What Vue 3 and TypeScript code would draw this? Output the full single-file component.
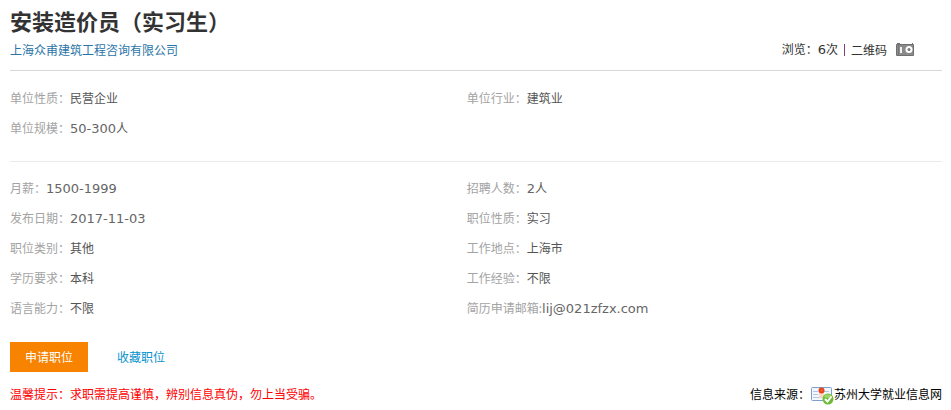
<script setup lang="ts">
interface Field {
  label: string
  value: string
}

interface Run {
  text: string
  latin: boolean
}

const company: Field[] = [
  { label: '单位性质：', value: '民营企业' },
  { label: '单位行业：', value: '建筑业' },
  { label: '单位规模：', value: '50-300人' },
]

const position: Field[] = [
  { label: '月薪：', value: '1500-1999' },
  { label: '招聘人数：', value: '2人' },
  { label: '发布日期：', value: '2017-11-03' },
  { label: '职位性质：', value: '实习' },
  { label: '职位类别：', value: '其他' },
  { label: '工作地点：', value: '上海市' },
  { label: '学历要求：', value: '本科' },
  { label: '工作经验：', value: '不限' },
  { label: '语言能力：', value: '不限' },
  { label: '简历申请邮箱:', value: 'lij@021zfzx.com' },
]

const views = 6

// Latin runs are set a little larger than the Chinese text around them.
function runs(value: string): Run[] {
  return (value.match(/[\x21-\x7e]+|[^\x21-\x7e]+/g) ?? []).map((text) => ({
    text,
    latin: /^[\x21-\x7e]/.test(text),
  }))
}
</script>

<template>
  <main class="job">
    <header class="head">
      <h1 class="title">安装造价员（实习生）</h1>
      <div class="subline">
        <a class="company" href="#company">上海众甫建筑工程咨询有限公司</a>
        <div class="meta">
          <span>浏览：<span class="latin">{{ views }}</span>次</span>
          <span class="bar"></span>
          <a class="qr" href="#qrcode">
            二维码
            <svg class="camera" width="18" height="13" viewBox="0 0 18 13" aria-hidden="true">
              <path d="M0 2q0-1 1-1V0h3v1h12V0h1v1q1 0 1 1v10q0 1-1 1H1q-1 0-1-1z" fill="#707070" />
              <path d="M1 2h16v10H1z" fill="#8a8a8a" />
              <path d="M2 2h1v10H2z" fill="#777" />
              <rect x="4" y="4" width="2" height="6" fill="#f2f2f2" />
              <circle cx="13" cy="6.500" r="3.500" fill="#fff" />
              <circle cx="13" cy="6.500" r="1.500" fill="#777" />
            </svg>
          </a>
        </div>
      </div>
    </header>

    <dl class="fields">
      <div v-for="f in company" :key="f.label" class="field">
        <dt>{{ f.label }}</dt>
        <dd><span v-for="(r, i) in runs(f.value)" :key="i" :class="{ latin: r.latin }">{{ r.text }}</span></dd>
      </div>
    </dl>

    <dl class="fields last">
      <div v-for="f in position" :key="f.label" class="field">
        <dt>{{ f.label }}</dt>
        <dd><span v-for="(r, i) in runs(f.value)" :key="i" :class="{ latin: r.latin }">{{ r.text }}</span></dd>
      </div>
    </dl>

    <div class="actions">
      <button class="apply" type="button">申请职位</button>
      <button class="save" type="button">收藏职位</button>
    </div>

    <footer class="foot">
      <p class="tip">温馨提示：求职需提高谨慎，辨别信息真伪，勿上当受骗。</p>
      <div class="source">
        <span>信息来源：</span>
        <svg class="badge" width="24" height="19" viewBox="0 0 24 19" aria-hidden="true">
          <rect x="1.500" y="1.500" width="20" height="13" rx="1" fill="#f4f8fe" stroke="#7d9fd0" />
          <path d="M3 5.500h5M14 5.500h5M3 8.500h5M3 11.500h9" stroke="#adc6ea" />
          <path d="M9 7h5v6l-2.500-2L9 13z" fill="#fbd9c4" />
          <circle cx="11.500" cy="4.500" r="3" fill="#e8441c" />
          <circle cx="11.500" cy="4.500" r="1" fill="#f2703c" />
          <circle cx="18" cy="13" r="5.500" fill="#6cba35" />
          <path d="M13.500 11a5 5 0 0 1 9 0q-4 2-9 0z" fill="#9bd766" />
          <path d="M15 13l2.500 2.500 4-5" fill="none" stroke="#fff" stroke-width="2" />
        </svg>
        <span>苏州大学就业信息网</span>
      </div>
    </footer>
  </main>
</template>

<style>
body {
  background: #fff;
}
</style>

<style scoped>
.job {
  padding: 5px 9px 0 10px;
  font: 12px/20px "Noto Sans CJK SC", sans-serif;
  color: #333;
}

.latin {
  font-family: "DejaVu Sans", sans-serif;
  font-size: 13px;
}

.head {
  border-bottom: 1px solid #d8d8d8;
  padding-bottom: 10px;
}

.title {
  margin: 0;
  font-size: 22px;
  line-height: 30px;
  font-weight: 700;
}

.subline {
  display: flex;
  justify-content: space-between;
  align-items: center;
  margin-top: 4px;
}

.company {
  color: #2a75a8;
  text-decoration: none;
}

.meta {
  display: flex;
  align-items: center;
  padding-right: 28px;
}

.bar {
  width: 1px;
  height: 12px;
  margin: 0 6px;
  background: #804080;
}

.qr {
  display: flex;
  align-items: center;
  gap: 9px;
  color: inherit;
  text-decoration: none;
}

.fields {
  display: grid;
  grid-template-columns: 49% 51%;
  margin: 0;
  padding: 12px 0 18px;
  border-bottom: 1px solid #ebebeb;
}

.fields.last {
  padding: 11px 0 19px;
  border-bottom: 0;
}

.field {
  display: flex;
  height: 30px;
  line-height: 30px;
  white-space: nowrap;
}

dt {
  color: #a3a3a3;
}

dd {
  margin: 0;
  color: #555;
}

dd .latin {
  color: #666;
}

.actions {
  display: flex;
  gap: 14px;
}

.actions button {
  height: 30px;
  padding: 0 15px;
  border: 0;
  font: inherit;
  cursor: pointer;
}

.apply {
  background: #f78300;
  color: #fff;
}

.save {
  background: none;
  color: #0892cd;
}

.foot {
  display: flex;
  justify-content: space-between;
  align-items: center;
  margin-top: 10px;
}

.tip {
  margin: 0;
  color: #f00;
}

.source {
  display: flex;
  align-items: center;
  color: #000;
}

.badge {
  margin-top: 4px;
}
</style>
